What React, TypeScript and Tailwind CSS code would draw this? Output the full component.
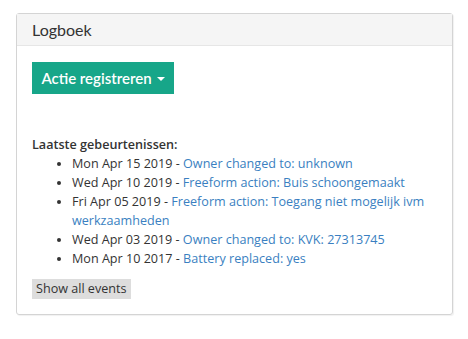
type LogEvent = {
  date: string;
  label: string;
};

const events: LogEvent[] = [
  { date: 'Mon Apr 15 2019', label: 'Owner changed to: unknown' },
  { date: 'Wed Apr 10 2019', label: 'Freeform action: Buis schoongemaakt' },
  { date: 'Fri Apr 05 2019', label: 'Freeform action: Toegang niet mogelijk ivm werkzaamheden' },
  { date: 'Wed Apr 03 2019', label: 'Owner changed to: KVK: 27313745' },
  { date: 'Mon Apr 10 2017', label: 'Battery replaced: yes' },
];

export default function App() {
  return (
    <div className="min-h-[339px] bg-white pt-[13px] pl-4 text-[#333]">
      <div className="w-[437px] rounded-[3px] border border-[#d4d4d4] shadow-[1px_1px_1px_rgba(0,0,0,0.06)]">
        <div className="h-[32px] border-b border-[#e6e6e6] bg-[#f5f5f5] pl-[15px] pt-[6px] font-['Lato',sans-serif] text-[16px] leading-[20px]">
          Logboek
        </div>
        <div className="px-[15px] pt-[16px] pb-[15px]">
          <button className="flex h-[32px] w-[142px] items-center justify-center gap-[5px] bg-[#17a689] font-['Lato',sans-serif] text-[15px] font-semibold text-white">
            Actie registreren
            <span className="mt-[1px] h-0 w-0 border-x-[4px] border-t-[4px] border-x-transparent border-t-white" />
          </button>

          <div className="mt-[41px] font-['Open_Sans',sans-serif] text-[12.6px] leading-[19px]">
            <p className="font-semibold">Laatste gebeurtenissen:</p>
            <ul className="list-disc pl-[40px]">
              {events.map((event) => (
                <li key={event.date + event.label}>
                  {event.date} - <a className="text-[#3a7fc1]">{event.label}</a>
                </li>
              ))}
            </ul>
          </div>

          <button className="mt-[11px] h-[20px] bg-[#ddd] px-[4px] font-['Open_Sans',sans-serif] text-[12.6px] leading-[20px] text-[#333]">
            Show all events
          </button>
        </div>
      </div>
    </div>
  );
}
